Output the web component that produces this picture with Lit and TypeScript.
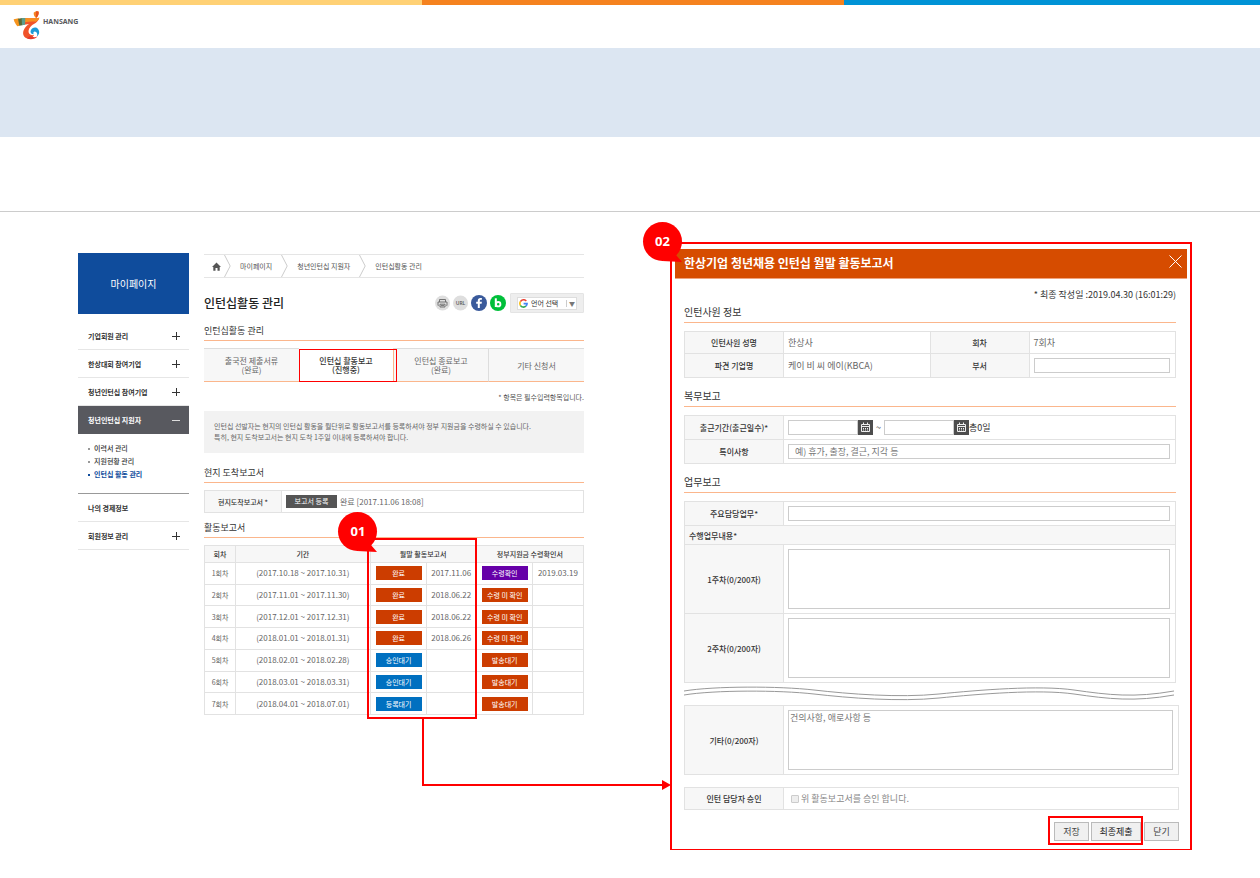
import { LitElement, html, css, svg, nothing } from "lit";
import { customElement, property } from "lit/decorators.js";
import { classMap } from "lit/directives/class-map.js";

const base = css`
  :host {
    display: block;
    font-family: "Noto Sans CJK KR", "Noto Sans", sans-serif;
    color: #333;
  }
  * {
    box-sizing: border-box;
  }
  h1, h2, p, ul {
    margin: 0;
    padding: 0;
    font-weight: 400;
  }
  ul {
    list-style: none;
  }
  a {
    color: inherit;
    text-decoration: none;
  }
  button, input, textarea, select {
    font-family: inherit;
    margin: 0;
    border-radius: 0;
  }
  button {
    padding: 0;
    border: 0;
    cursor: pointer;
  }
  svg {
    display: block;
  }
  table {
    width: 100%;
    table-layout: fixed;
    border-collapse: separate;
    border-spacing: 0;
    border-top: 1px solid #e2e2e2;
    border-left: 1px solid #e2e2e2;
  }
  th, td {
    padding: 0;
    border-right: 1px solid #e2e2e2;
    border-bottom: 1px solid #e2e2e2;
  }
  th {
    background: #f7f7f7;
    font-weight: 500;
  }
`;

@customElement("step-marker")
class StepMarker extends LitElement {
  @property() label = "";
  static styles = css`
    :host {
      display: block;
      position: relative;
      width: 39px;
      height: 39px;
    }
    svg {
      display: block;
      overflow: visible;
    }
    .label {
      position: absolute;
      inset: 0;
      color: #fff;
      font: 700 13px/39px "Noto Sans", sans-serif;
      text-align: center;
    }
  `;
  render() {
    return html`<svg width="39" height="39" viewBox="0 0 39 39" fill="#f00" aria-hidden="true">
        <circle cx="19.5" cy="19.5" r="19.5" />
        <path d="M19 39 33 33 39 40Z" />
      </svg>
      <span class="label">${this.label}</span>`;
  }
}

interface MenuItem {
  text: string;
  mark: "plus" | "minus" | "";
  children?: string[];
}

const MENU: MenuItem[] = [
  { text: "기업회원 관리", mark: "plus" },
  { text: "한상대회 참여기업", mark: "plus" },
  { text: "청년인턴십 참여기업", mark: "plus" },
  { text: "청년인턴십 지원자", mark: "minus", children: ["이력서 관리", "지원현황 관리", "인턴십 활동 관리"] },
  { text: "나의 경제정보", mark: "" },
  { text: "회원정보 관리", mark: "plus" },
];

@customElement("side-menu")
class SideMenu extends LitElement {
  static styles = [
    base,
    css`
      .head {
        height: 61px;
        margin-bottom: 8px;
        background: #0f4c9c;
        color: #fff;
        font-size: 10px;
        line-height: 61px;
        text-align: center;
      }
      .item {
        display: flex;
        justify-content: space-between;
        align-items: center;
        height: 28px;
        padding: 0 9px 0 10px;
        border-bottom: 1px solid #e6e6e6;
        font-size: 7px;
        font-weight: 700;
      }
      .open {
        background: #58595f;
        border-color: #58595f;
        color: #fff;
      }
      .sub {
        padding: 8px 0 12px 10px;
        border-bottom: 1px solid #999;
        font-size: 7px;
        font-weight: 500;
        line-height: 13px;
      }
      .sub a {
        display: flex;
        align-items: center;
        gap: 4px;
      }
      .sub a::before {
        content: "";
        width: 2px;
        height: 2px;
        background: #999;
      }
      .sub .here {
        color: #0f4c9c;
        font-weight: 700;
      }
      .sub .here::before {
        background: #0f4c9c;
      }
    `,
  ];
  render() {
    return html`<nav>
      <div class="head">마이페이지</div>
      ${MENU.map(
        (m) => html`<a href="#" class=${classMap({ item: true, open: !!m.children })}>
            <span>${m.text}</span>
            ${m.mark
              ? html`<svg width="8" height="8" viewBox="0 0 8 8" stroke=${m.children ? "#ddd" : "#333"} fill="none">
                  <path d=${m.mark === "plus" ? "M0 4.5H8M4.5 0V8" : "M0 4.5H8"} />
                </svg>`
              : nothing}
          </a>
          ${m.children
            ? html`<ul class="sub">
                ${m.children.map((c, i) => html`<li><a href="#" class=${i === 2 ? "here" : ""}>${c}</a></li>`)}
              </ul>`
            : nothing}`
      )}
    </nav>`;
  }
}

interface Row {
  no: string;
  period: string;
  report: string;
  reported: string;
  grant: string;
  granted: string;
}

const ROWS: Row[] = [
  { no: "1회차", period: "(2017.10.18 ~ 2017.10.31)", report: "완료", reported: "2017.11.06", grant: "수령확인", granted: "2019.03.19" },
  { no: "2회차", period: "(2017.11.01 ~ 2017.11.30)", report: "완료", reported: "2018.06.22", grant: "수령 미 확인", granted: "" },
  { no: "3회차", period: "(2017.12.01 ~ 2017.12.31)", report: "완료", reported: "2018.06.22", grant: "수령 미 확인", granted: "" },
  { no: "4회차", period: "(2018.01.01 ~ 2018.01.31)", report: "완료", reported: "2018.06.26", grant: "수령 미 확인", granted: "" },
  { no: "5회차", period: "(2018.02.01 ~ 2018.02.28)", report: "승인대기", reported: "", grant: "발송대기", granted: "" },
  { no: "6회차", period: "(2018.03.01 ~ 2018.03.31)", report: "승인대기", reported: "", grant: "발송대기", granted: "" },
  { no: "7회차", period: "(2018.04.01 ~ 2018.07.01)", report: "등록대기", reported: "", grant: "발송대기", granted: "" },
];

@customElement("activity-page")
class ActivityPage extends LitElement {
  static styles = [
    base,
    css`
      .crumbs {
        display: flex;
        align-items: center;
        gap: 9px;
        height: 24px;
        margin-top: 1px;
        padding-left: 8px;
        border-top: 1px solid #e5e5e5;
        border-bottom: 1px solid #e5e5e5;
        color: #555;
        font-size: 7px;
      }
      .home {
        display: flex;
        align-items: center;
        gap: 3px;
      }
      .top {
        display: flex;
        justify-content: space-between;
        align-items: center;
        height: 20px;
        margin: 15px 0 10px;
      }
      h1 {
        font-size: 12px;
        font-weight: 500;
        line-height: 20px;
        color: #222;
      }
      .tools {
        display: flex;
        align-items: center;
        gap: 3px;
      }
      .tools button {
        background: none;
      }
      .lang {
        display: flex;
        align-items: center;
        height: 20px;
        margin-left: 1px;
        padding: 0 6px;
        background: #eee;
        border: 1px solid #e4e4e4;
        border-radius: 1px;
      }
      .pick {
        display: flex;
        align-items: center;
        gap: 3px;
        height: 13px;
        padding: 0 1px;
        background: #fff;
        border: 1px solid #ddd;
      }
      select {
        width: 32px;
        padding: 0;
        border: 0;
        appearance: none;
        background: none;
        color: #333;
        font-size: 7px;
        line-height: 11px;
      }
      .arrow {
        padding-left: 2px;
        border-left: 1px solid #ccc;
        color: #777;
        font-size: 6px;
        line-height: 7px;
      }
      h2 {
        padding-bottom: 1px;
        border-bottom: 1px solid #fbb68c;
        font-size: 9px;
        line-height: 16px;
      }
      .tabs {
        display: grid;
        grid-template-columns: repeat(4, 1fr);
        margin: 7px 0 8px;
      }
      .tab {
        display: flex;
        align-items: center;
        justify-content: center;
        height: 34px;
        border-top: 1px solid #ddd;
        border-bottom: 1px solid #fbb68c;
        border-right: 1px solid #ddd;
        background: #f7f7f7;
        color: #666;
        font-size: 8px;
        line-height: 9px;
        text-align: center;
      }
      .tab:first-child,
      .tab:last-child {
        border-right: 0;
      }
      .current {
        position: relative;
        background: #fff;
        border-color: #fff #fbb68c #fff #fff;
        color: #333;
        font-weight: 500;
      }
      .current::after {
        content: "";
        position: absolute;
        inset: 0 -4px -1px 0;
        border: 1px solid #f00;
      }
      .required {
        color: #555;
        font-size: 7px;
        line-height: 14px;
        text-align: right;
      }
      .notice {
        margin: 7px 0 12px;
        padding: 10px;
        background: #f2f2f2;
        color: #666;
        font-size: 7px;
        line-height: 11px;
      }
      .arrival {
        margin: 7px 0;
      }
      .arrival th {
        width: 77px;
        height: 22px;
        font-size: 7px;
      }
      .arrival td {
        font-size: 8px;
        color: #666;
      }
      .line {
        display: flex;
        align-items: center;
        gap: 3px;
        padding-left: 4px;
      }
      .register {
        width: 51px;
        height: 13px;
        background: #555;
        color: #fff;
        font-size: 7px;
        line-height: 13px;
      }
      .rounds {
        position: relative;
        margin-top: 7px;
      }
      .rounds table {
        height: 170px;
      }
      .rounds th {
        height: 17px;
        font-size: 7px;
      }
      .rounds td {
        height: 21px;
        color: #666;
        font-size: 8px;
        line-height: 12px;
        text-align: center;
      }
      .rounds .no {
        font-size: 7px;
      }
      .c1 { width: 8.2%; }
      .c2 { width: 35.5%; }
      .c3 { width: 14.8%; }
      .c4 { width: 13.2%; }
      .c5 { width: 14.8%; }
      .state {
        display: block;
        width: 46px;
        height: 14px;
        margin-left: 5px;
        background: #cc3d00;
        color: #fff;
        font-size: 7px;
        line-height: 14px;
      }
      .waiting {
        background: #0070c0;
      }
      .received {
        background: #6600a8;
      }
      .frame {
        position: absolute;
        top: -7px;
        bottom: -4px;
        left: 43%;
        right: 28.2%;
        border: 2px solid #f00;
        pointer-events: none;
      }
      .marker {
        position: absolute;
        top: -28px;
        left: -31px;
      }
      .link {
        position: absolute;
        top: calc(100% + 4px);
        left: 57.3%;
        right: -79px;
        height: 67px;
        border-left: 2px solid #f00;
        border-bottom: 2px solid #f00;
      }
      .link::after {
        content: "";
        position: absolute;
        right: -8px;
        bottom: -6px;
        border: 5px solid transparent;
        border-left: 9px solid #f00;
        border-right: 0;
      }
    `,
  ];

  private chevron() {
    return html`<svg width="7" height="22" viewBox="0 0 7 22" fill="none" stroke="#ccc" aria-hidden="true">
      <path d="M.5 0 6.2 11 .5 22" />
    </svg>`;
  }

  private tools() {
    return html`<div class="tools">
      <button aria-label="인쇄">
        <svg width="15" height="16" viewBox="0 0 15 16">
          <circle cx="7.5" cy="8" r="7.5" fill="#dedede" />
          <path d="M4.5 7V4.5H10.5V7M3.5 10.5H3V7H12V10.5H11.5M5 9.2H10V12H5ZM6 10.6H9" fill="none" stroke="#666" stroke-width=".9" />
        </svg>
      </button>
      <button aria-label="URL 복사">
        <svg width="15" height="16" viewBox="0 0 15 16">
          <circle cx="7.5" cy="8" r="7.5" fill="#dedede" />
          <text x="7.5" y="10" text-anchor="middle" font-family="Open Sans, sans-serif" font-size="5" font-weight="600" fill="#555">URL</text>
        </svg>
      </button>
      <button aria-label="페이스북">
        <svg width="16" height="16" viewBox="0 0 16 16">
          <circle cx="8" cy="8" r="8" fill="#3a5a9b" />
          <path d="M8.8 13V8.7H10.6L10.9 6.8H8.8V5.7C8.8 5.1 9.1 4.8 9.7 4.8H10.9V3.1C10.6 3 10 3 9.4 3 7.8 3 6.8 3.9 6.8 5.5V6.8H5.2V8.7H6.8V13Z" fill="#fff" />
        </svg>
      </button>
      <button aria-label="블로그">
        <svg width="16" height="16" viewBox="0 0 16 16">
          <circle cx="8" cy="8" r="8" fill="#00bf3a" />
          <path d="M5.8 3.3V12" stroke="#fff" stroke-width="2" />
          <circle cx="8.2" cy="9.2" r="2.2" fill="none" stroke="#fff" stroke-width="1.9" />
        </svg>
      </button>
      <div class="lang">
        <div class="pick">
          <svg width="9" height="9" viewBox="0 0 9 9" fill="none" stroke-width="1.6" aria-hidden="true">
            <path d="M7.3 2A3.6 3.6 0 0 0 1.4 2.7" stroke="#ea4335" />
            <path d="M1.4 2.7A3.6 3.6 0 0 0 1.4 6.3" stroke="#fbbc05" />
            <path d="M1.4 6.3A3.6 3.6 0 0 0 6.9 7.2" stroke="#34a853" />
            <path d="M6.9 7.2A3.6 3.6 0 0 0 8.1 4.6H4.6" stroke="#4285f4" />
          </svg>
          <select aria-label="언어 선택"><option>언어 선택</option></select>
          <span class="arrow">▼</span>
        </div>
      </div>
    </div>`;
  }

  render() {
    return html`<main>
      <nav class="crumbs" aria-label="현재 위치">
        <a href="#" class="home" aria-label="홈">
          <svg width="9" height="9" viewBox="0 0 9 9" fill="#555"><path d="M4.5 .5 9 5H7.7V8.8H5.5V6H3.5V8.8H1.3V5H0Z" /></svg>
          ${this.chevron()}
        </a>
        <a href="#">마이페이지</a>${this.chevron()}
        <a href="#">청년인턴십 지원자</a>${this.chevron()}
        <a href="#">인턴십활동 관리</a>
      </nav>
      <div class="top">
        <h1>인턴십활동 관리</h1>
        ${this.tools()}
      </div>
      <h2>인턴십활동 관리</h2>
      <nav class="tabs">
        <a href="#" class="tab">출국전 제출서류<br />(완료)</a>
        <a href="#" class="tab current" aria-current="page">인턴십 활동보고<br />(진행중)</a>
        <a href="#" class="tab">인턴십 종료보고<br />(완료)</a>
        <a href="#" class="tab">기타 신청서</a>
      </nav>
      <p class="required">* 항목은 필수입력항목입니다.</p>
      <p class="notice">
        인턴십 선발자는 현지의 인턴십 활동을 월단위로 활동보고서를 등록하셔야 정부 지원금을 수령하실 수 있습니다.<br />
        특히, 현지 도착보고서는 현지 도착 1주일 이내에 등록하셔야 합니다.
      </p>
      <h2>현지 도착보고서</h2>
      <table class="arrival">
        <tr>
          <th scope="row">현지도착보고서 *</th>
          <td><div class="line"><button class="register">보고서 등록</button><span>완료 [2017.11.06 18:08]</span></div></td>
        </tr>
      </table>
      <h2>활동보고서</h2>
      <div class="rounds">
        <table>
          <colgroup><col class="c1" /><col class="c2" /><col class="c3" /><col class="c4" /><col class="c5" /><col /></colgroup>
          <thead>
            <tr>
              <th scope="col">회차</th>
              <th scope="col">기간</th>
              <th scope="colgroup" colspan="2">월말 활동보고서</th>
              <th scope="colgroup" colspan="2">정부지원금 수령확인서</th>
            </tr>
          </thead>
          <tbody>
            ${ROWS.map(
              (r) => html`<tr>
                <td class="no">${r.no}</td>
                <td>${r.period}</td>
                <td><button class=${classMap({ state: true, waiting: r.report !== "완료" })}>${r.report}</button></td>
                <td>${r.reported}</td>
                <td><button class=${classMap({ state: true, received: r.grant === "수령확인" })}>${r.grant}</button></td>
                <td>${r.granted}</td>
              </tr>`
            )}
          </tbody>
        </table>
        <div class="frame"><step-marker class="marker" label="01"></step-marker></div>
        <div class="link"></div>
      </div>
    </main>`;
  }
}

@customElement("report-dialog")
class ReportDialog extends LitElement {
  static styles = [
    base,
    css`
      :host {
        position: relative;
      }
      .box {
        padding: 5px 3px;
        border: 2px solid #f00;
        border-bottom-width: 1px;
      }
      .marker {
        position: absolute;
        top: -20px;
        left: -27px;
      }
      .bar {
        display: flex;
        justify-content: space-between;
        align-items: center;
        height: 30px;
        padding: 0 5px 1px 9px;
        background: #d64c00;
        border-bottom: 1px solid #f0a27c;
        color: #fff;
      }
      h1 {
        font-size: 12px;
        font-weight: 700;
        line-height: 20px;
      }
      .close {
        margin-bottom: 3px;
        background: none;
      }
      .body {
        padding: 8px 8px 0 9px;
      }
      .part {
        margin-right: 3px;
      }
      .date {
        font-size: 9px;
        line-height: 16px;
        text-align: right;
      }
      h2 {
        margin-bottom: 8px;
        padding-bottom: 1px;
        border-bottom: 1px solid #fbb68c;
        font-size: 10px;
        line-height: 18px;
      }
      table + h2 {
        margin-top: 9px;
      }
      th {
        width: 99px;
        font-size: 8px;
      }
      td {
        padding: 0 5px 0 4px;
        color: #666;
        font-size: 9px;
      }
      .h22 { height: 22px; }
      .h24 { height: 24px; }
      .h19 { height: 19px; }
      .h69 { height: 69px; }
      .wide {
        padding-left: 4px;
        text-align: left;
      }
      input[type="text"], textarea {
        display: block;
        width: 100%;
        border: 1px solid #ccc;
        background: #fff;
        color: #666;
        font-size: 9px;
      }
      input[type="text"] {
        height: 15px;
        padding: 0 6px;
      }
      textarea {
        height: 60px;
        padding: 1px;
        line-height: 12px;
        resize: none;
      }
      ::placeholder {
        color: #777;
        opacity: 1;
      }
      .period {
        display: flex;
        align-items: center;
        color: #333;
      }
      .period input[type="text"] {
        width: 70px;
      }
      .cal {
        background: #4d4d4d;
      }
      .tilde {
        width: 11px;
        text-align: center;
      }
      .wave {
        width: 100%;
        height: 16px;
        margin: 3px 0;
      }
      .approve {
        margin-top: 12px;
      }
      .check {
        display: flex;
        align-items: center;
        gap: 2px;
        padding-left: 3px;
        color: #888;
      }
      .check input {
        appearance: none;
        width: 8px;
        height: 8px;
        background: #eee;
        border: 1px solid #ccc;
        border-radius: 1px;
      }
      .actions {
        display: flex;
        justify-content: flex-end;
        gap: 3px;
        margin: 12px 0 3px;
      }
      .pair {
        position: relative;
        display: flex;
        gap: 2px;
      }
      .pair::after {
        content: "";
        position: absolute;
        inset: -6px -2px -4px -6px;
        border: 2px solid #f00;
        pointer-events: none;
      }
      .act {
        width: 35px;
        height: 19px;
        border: 1px solid #bbb;
        background: #f0f0f0;
        color: #444;
        font-size: 9px;
        line-height: 17px;
      }
      .final {
        width: 50px;
        color: #222;
      }
    `,
  ];

  private calendar(label: string) {
    return html`<button class="cal" type="button" aria-label=${label}>
      <svg width="15" height="15" viewBox="0 0 15 15" fill="none" stroke="#eee">
        <path d="M3.5 4.5H11.5V11.5H3.5ZM3 6.500H12M5.500 2.500V5M9.500 2.500V5" />
        <path d="M5 8.500H10M5 10H10" stroke-dasharray="1 1" />
      </svg>
    </button>`;
  }

  private waves() {
    const d = "M0 5C30 0 95 0 130 4S215 12 255 8 355 -1 390 4 450 12 490 5";
    return svg`<path d=${d} /><path d=${d} transform="translate(0 4)" />`;
  }

  render() {
    return html`<section class="box" role="dialog" aria-labelledby="title">
        <header class="bar">
          <h1 id="title">한상기업 청년채용 인턴십 월말 활동보고서</h1>
          <button class="close" aria-label="닫기">
            <svg width="13" height="13" viewBox="0 0 13 13" stroke="#fff"><path d="M.5 .5 12.500 12.500M12.500 .5 .5 12.500" /></svg>
          </button>
        </header>
        <form class="body" @submit=${(e: Event) => e.preventDefault()}>
          <div class="part">
            <p class="date">* 최종 작성일 :2019.04.30 (16:01:29)</p>
            <h2>인턴사원 정보</h2>
            <table>
              <tr><th class="h22" scope="row">인턴사원 성명</th><td>한상사</td><th scope="row">회차</th><td>7회차</td></tr>
              <tr>
                <th class="h24" scope="row">파견 기업명</th><td>케이 비 씨 에이(KBCA)</td>
                <th scope="row"><label for="dept">부서</label></th><td><input type="text" id="dept" /></td>
              </tr>
            </table>
            <h2>복무보고</h2>
            <table>
              <tr>
                <th class="h24" scope="row"><label for="from">출근기간(출근일수)*</label></th>
                <td>
                  <div class="period">
                    <input type="text" id="from" />${this.calendar("시작일 선택")}
                    <span class="tilde">~</span>
                    <input type="text" aria-label="종료일" />${this.calendar("종료일 선택")}
                    <span>총0일</span>
                  </div>
                </td>
              </tr>
              <tr>
                <th class="h24" scope="row"><label for="note">특이사항</label></th>
                <td><input type="text" id="note" placeholder="예) 휴가, 출장, 결근, 지각 등" /></td>
              </tr>
            </table>
            <h2>업무보고</h2>
            <table>
              <tr>
                <th class="h24" scope="row"><label for="duty">주요담당업무*</label></th>
                <td><input type="text" id="duty" /></td>
              </tr>
              <tr><th class="h19 wide" colspan="2">수행업무내용*</th></tr>
              <tr>
                <th class="h69" scope="row"><label for="w1">1주차(0/200자)</label></th>
                <td><textarea id="w1"></textarea></td>
              </tr>
              <tr>
                <th class="h69" scope="row"><label for="w2">2주차(0/200자)</label></th>
                <td><textarea id="w2"></textarea></td>
              </tr>
            </table>
            <svg class="wave" viewBox="0 0 492 16" preserveAspectRatio="none" fill="none" stroke="#999" aria-hidden="true">${this.waves()}</svg>
          </div>
          <table>
            <tr>
              <th class="h69" scope="row"><label for="etc">기타(0/200자)</label></th>
              <td><textarea id="etc" placeholder="건의사항, 애로사항 등"></textarea></td>
            </tr>
          </table>
          <table class="approve">
            <tr>
              <th class="h22" scope="row">인턴 담당자 승인</th>
              <td><label class="check"><input type="checkbox" disabled />위 활동보고서를 승인 합니다.</label></td>
            </tr>
          </table>
          <div class="actions">
            <div class="pair">
              <button class="act">저장</button>
              <button class="act final">최종제출</button>
            </div>
            <button class="act">닫기</button>
          </div>
        </form>
      </section>
      <step-marker class="marker" label="02"></step-marker>`;
  }
}

@customElement("app-root")
class AppRoot extends LitElement {
  static styles = [
    base,
    css`
      :host {
        min-height: 100vh;
        background: #fff;
      }
      .strip {
        display: grid;
        grid-template-columns: 422fr 422fr 416fr;
        height: 5px;
      }
      .yellow { background: #ffd175; }
      .orange { background: #f5821f; }
      .blue { background: #0093d6; }
      .brand {
        display: flex;
        gap: 2px;
        height: 43px;
        padding: 5px 13px;
      }
      .name {
        padding-top: 6px;
        color: #58595b;
        font: 700 7px/12px "Noto Sans", sans-serif;
      }
      .band {
        height: 89px;
        background: #dce6f2;
      }
      .blank {
        height: 75px;
        border-bottom: 1px solid #ccc;
      }
      .stage {
        display: grid;
        grid-template-columns: 111px minmax(0, 481fr) minmax(0, 522fr);
        align-items: start;
        padding: 30px 68px 27px 78px;
      }
      .menu {
        margin-top: 11px;
      }
      .page {
        margin: 11px 86px 0 15px;
      }
    `,
  ];
  render() {
    return html`
      <div class="strip"><div class="yellow"></div><div class="orange"></div><div class="blue"></div></div>
      <header class="brand">
        <svg width="28" height="31" viewBox="39 30 84 93" aria-hidden="true">
          <path d="M101 38C106 34 112 33 116 35 117 43 113 50 108 54 103 50 101 45 101 38Z" fill="#f58220" />
          <path d="M108 34C112 33 115 34 116 35 117 43 113 50 108 54Z" fill="#e8501f" />
          <path d="M74 54C90 55 104 56 118 53 116 61 110 67 103 71 94 76 87 83 86 91 84 101 91 107 102 105 97 115 88 118 80 115 70 111 67 101 71 91 74 83 80 77 87 72L73 74Z" fill="#f0532a" />
          <path d="M74 54C90 55 104 56 118 53 116 58 112 63 107 65 96 64 85 65 74 67Z" fill="#f7901e" />
          <path d="M41 58 56 55 59 77 52 79C47 73 43 66 41 58Z" fill="#f7941d" />
          <path d="M54 56 67 54 67 76 58 77Z" fill="#5a6b35" />
          <path d="M65 54 76 54 75 74 66 76Z" fill="#5a9c8c" />
          <path d="M80 115C92 121 107 117 113 109 106 113 98 112 90 108Z" fill="#e23b2e" />
          <path d="M92 92C96 82 108 80 114 87 120 94 118 104 111 109 113 101 111 96 106 95 101 94 99 98 101 103 94 102 90 98 92 92Z" fill="#1c9ad6" />
        </svg>
        <span class="name">HANSANG</span>
      </header>
      <div class="band"></div>
      <div class="blank"></div>
      <div class="stage">
        <side-menu class="menu"></side-menu>
        <activity-page class="page"></activity-page>
        <report-dialog></report-dialog>
      </div>
    `;
  }
}
